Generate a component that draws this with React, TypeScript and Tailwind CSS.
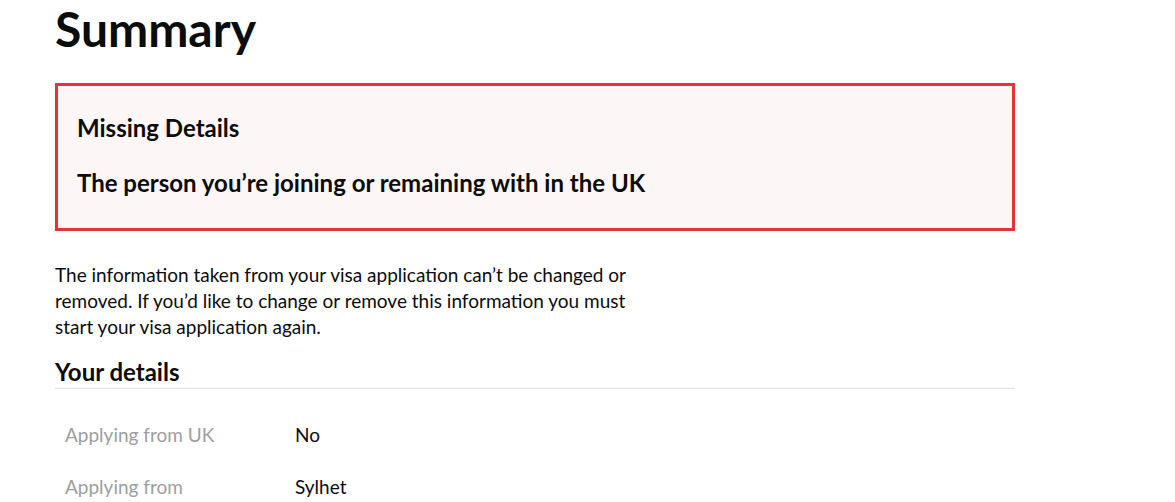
export default function App() {
  return (
    <div className="min-h-screen bg-white text-[#0b0c0c]" style={{ fontFamily: "Lato, 'Noto Sans', sans-serif" }}>
      <main className="ml-[55px] w-[960px] pt-[4px]">
        <h1 className="text-[48px] font-bold leading-[50px]">Summary</h1>

        <div className="mt-[29px] border-[3px] border-[#e0353b] bg-[#fcf6f6] px-[19px] pt-[27px] pb-[30px]">
          <h2 className="text-[24px] font-bold leading-[30px]">Missing Details</h2>
          <h3 className="mt-[25px] text-[24px] font-bold leading-[30px]">
            The person you’re joining or remaining with in the UK
          </h3>
        </div>

        <p className="mt-[31px] w-[600px] text-[19px] leading-[26px]">
          The information taken from your visa application can’t be changed or removed. If you’d like to change or
          remove this information you must start your visa application again.
        </p>

        <h2 className="mt-[17px] border-b border-[#e0e0e0] pb-[1px] text-[24px] font-bold leading-[30px]">
          Your details
        </h2>

        <dl className="text-[19px] leading-[26px]">
          <div className="flex py-[13px] pt-[33px]">
            <dt className="w-[240px] pl-[10px] text-[#9e9e9e]">Applying from UK</dt>
            <dd>No</dd>
          </div>
          <div className="flex py-[13px]">
            <dt className="w-[240px] pl-[10px] text-[#9e9e9e]">Applying from</dt>
            <dd>Sylhet</dd>
          </div>
        </dl>
      </main>
    </div>
  );
}
